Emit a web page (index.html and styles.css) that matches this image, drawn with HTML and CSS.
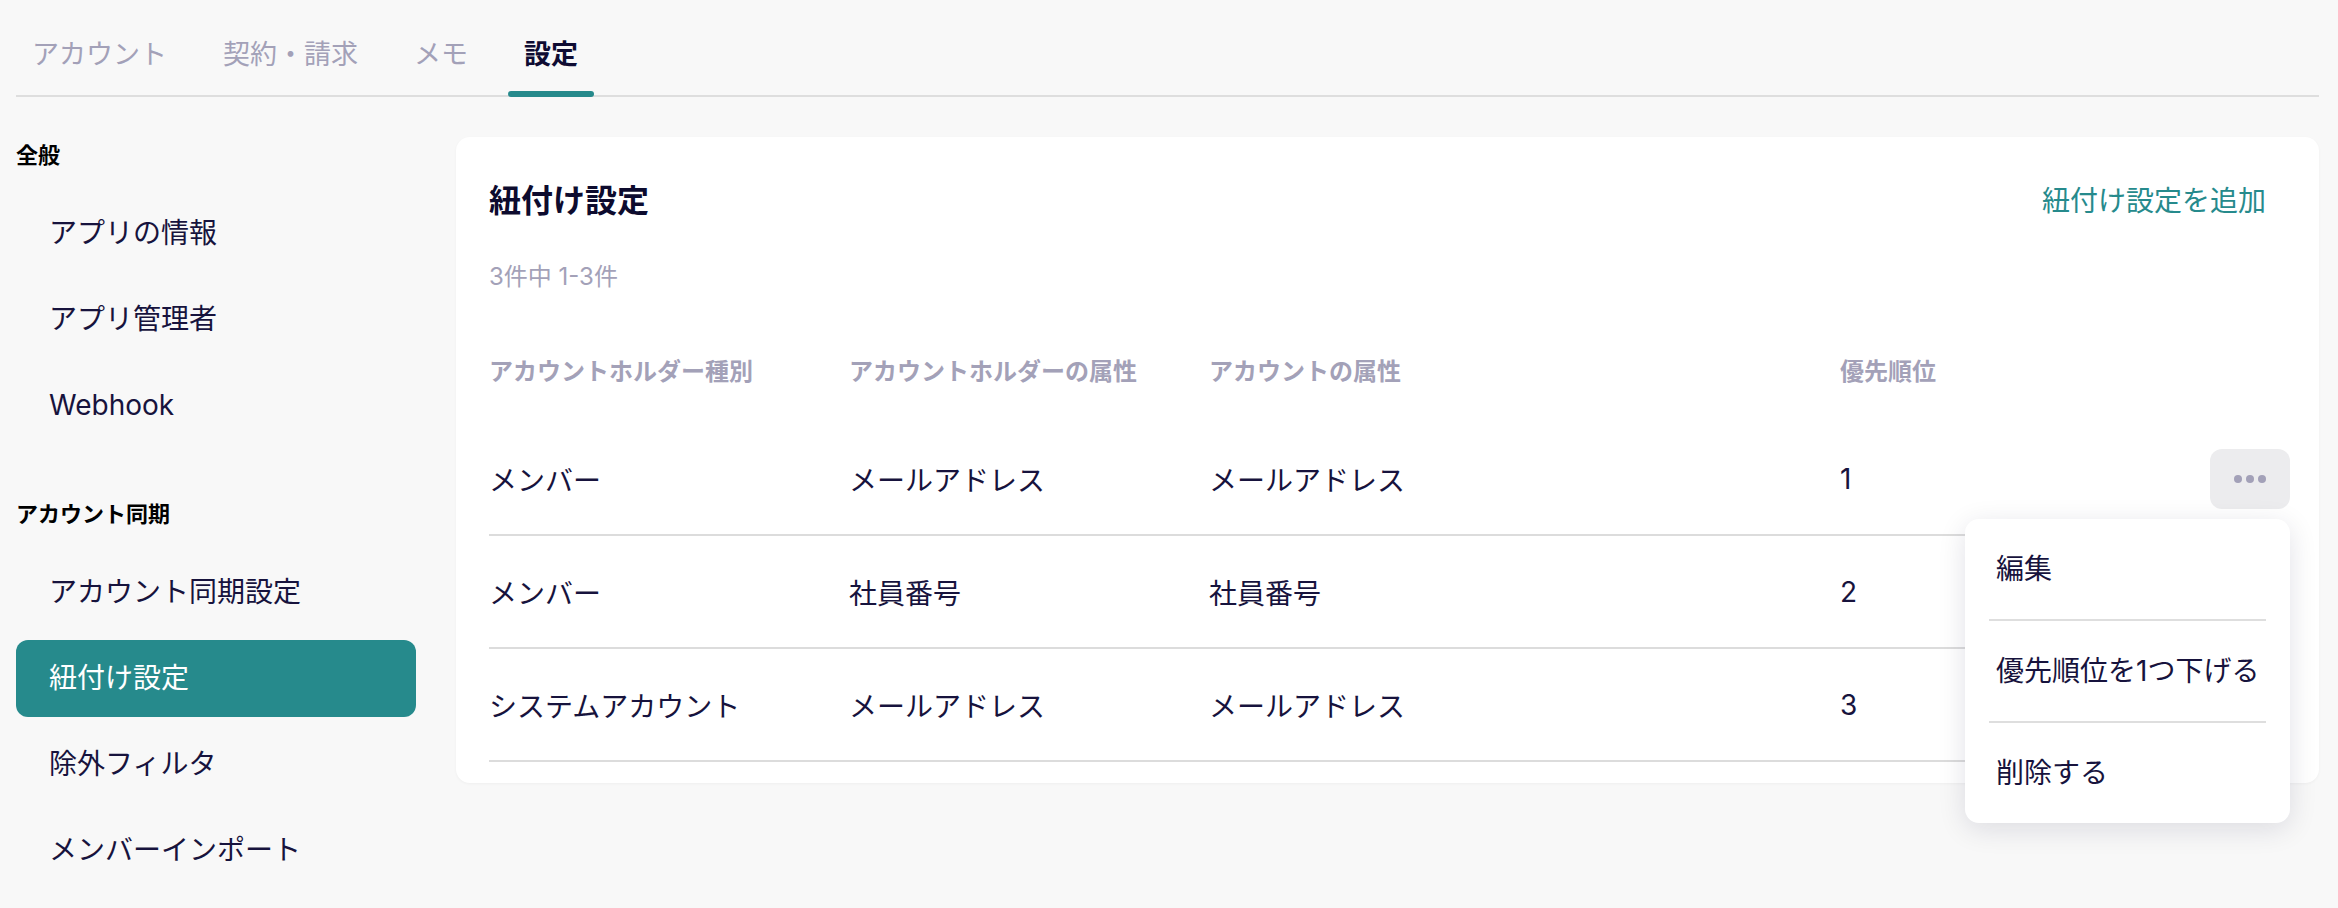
FILE: index.html
```html
<!DOCTYPE html>
<html lang="ja">
<head>
    <meta charset="UTF-8">
    <meta name="viewport" content="width=device-width, initial-scale=1.0">
    <title>設定 - 紐付け設定</title>
    <link rel="stylesheet" href="styles.css">
</head>
<body>
    <nav class="tabs">
        <a class="tab">アカウント</a>
        <a class="tab">契約・請求</a>
        <a class="tab">メモ</a>
        <a class="tab active">設定</a>
    </nav>

    <div class="layout">
        <aside class="sidebar">
            <div class="side-group">
                <h3 class="side-heading">全般</h3>
                <ul class="side-list">
                    <li class="side-item">アプリの情報</li>
                    <li class="side-item">アプリ管理者</li>
                    <li class="side-item">Webhook</li>
                </ul>
            </div>
            <div class="side-group">
                <h3 class="side-heading">アカウント同期</h3>
                <ul class="side-list">
                    <li class="side-item">アカウント同期設定</li>
                    <li class="side-item active">紐付け設定</li>
                    <li class="side-item">除外フィルタ</li>
                    <li class="side-item">メンバーインポート</li>
                </ul>
            </div>
        </aside>

        <main class="card">
            <div class="card-head">
                <h2 class="card-title">紐付け設定</h2>
                <a class="add-link">紐付け設定を追加</a>
            </div>
            <p class="count">3件中 1-3件</p>

            <table class="rules">
                <thead>
                    <tr>
                        <th class="col-type">アカウントホルダー種別</th>
                        <th class="col-attr">アカウントホルダーの属性</th>
                        <th class="col-acc">アカウントの属性</th>
                        <th class="col-prio">優先順位</th>
                        <th class="col-actions"></th>
                    </tr>
                </thead>
                <tbody>
                    <tr>
                        <td>メンバー</td>
                        <td>メールアドレス</td>
                        <td>メールアドレス</td>
                        <td>1</td>
                        <td class="actions">
                            <button class="kebab" aria-label="メニュー">
                                <svg width="32" height="8" viewBox="0 0 32 8">
                                    <circle cx="4" cy="4" r="4" fill="#a3a1b8"/>
                                    <circle cx="16" cy="4" r="4" fill="#a3a1b8"/>
                                    <circle cx="28" cy="4" r="4" fill="#a3a1b8"/>
                                </svg>
                            </button>
                            <div class="menu">
                                <div class="menu-item">編集</div>
                                <div class="menu-sep"></div>
                                <div class="menu-item">優先順位を1つ下げる</div>
                                <div class="menu-sep"></div>
                                <div class="menu-item">削除する</div>
                            </div>
                        </td>
                    </tr>
                    <tr>
                        <td>メンバー</td>
                        <td>社員番号</td>
                        <td>社員番号</td>
                        <td>2</td>
                        <td class="actions"></td>
                    </tr>
                    <tr>
                        <td>システムアカウント</td>
                        <td>メールアドレス</td>
                        <td>メールアドレス</td>
                        <td>3</td>
                        <td class="actions"></td>
                    </tr>
                </tbody>
            </table>
        </main>
    </div>
</body>
</html>
```

FILE: styles.css
```css
body {
    font-family: Inter, "Noto Sans CJK JP", sans-serif;
    margin: 0;
    padding: 0 19px 0 16px;
    background: #f8f8f8;
    color: #17133d;
}
ul {
    list-style: none;
    margin: 0;
    padding: 0;
}

/* tabs */
.tabs {
    display: flex;
    gap: 24px;
    border-bottom: 2px solid #dedede;
}
.tab {
    position: relative;
    padding: 35px 16px 20px;
    font-size: 27px;
    line-height: 40px;
    color: #a3a1b8;
    cursor: pointer;
}
.tab.active {
    color: #0f0c33;
    font-weight: 700;
}
.tab.active::after {
    content: "";
    position: absolute;
    left: 0;
    right: 0;
    bottom: -2px;
    height: 6px;
    border-radius: 3px;
    background: #268a8c;
}

.layout {
    display: flex;
    gap: 40px;
    margin-top: 40px;
    align-items: flex-start;
}

/* sidebar */
.sidebar {
    width: 400px;
    flex-shrink: 0;
    padding-top: 3px;
}
.side-group + .side-group {
    margin-top: 55px;
}
.side-heading {
    margin: 0 0 25px;
    font-size: 22px;
    line-height: 30px;
    font-weight: 700;
    color: #000;
}
.side-list {
    display: flex;
    flex-direction: column;
    gap: 9px;
}
.side-item {
    height: 77px;
    line-height: 77px;
    padding-left: 33px;
    font-size: 28px;
    border-radius: 12px;
    cursor: pointer;
}
.side-item.active {
    background: #268a8c;
    color: #fff;
}

/* card */
.card {
    flex: 1;
    background: #fff;
    border-radius: 14px;
    padding: 42px 29px 21px 33px;
    box-shadow: 0 1px 3px rgba(0,0,0,0.04);
}
.card-head {
    display: flex;
    justify-content: space-between;
    align-items: center;
}
.card-title {
    margin: 0;
    font-size: 32px;
    line-height: 44px;
    font-weight: 700;
    color: #0d0b2e;
}
.add-link {
    font-size: 28px;
    line-height: 40px;
    padding-right: 24px;
    color: #268a8c;
    cursor: pointer;
}
.count {
    margin: 38px 0 0;
    font-size: 24px;
    line-height: 32px;
    color: #a3a1b8;
}

.rules {
    width: 100%;
    margin-top: 22px;
    border-collapse: separate;
    border-spacing: 0;
    table-layout: fixed;
}
.rules th {
    height: 108px;
    padding: 0;
    text-align: left;
    font-size: 24px;
    font-weight: 700;
    color: #a3a1b8;
}
.col-type,
.col-attr { width: 360px; }
.col-acc { width: 631px; }
.col-actions { width: 250px; }
.rules td {
    height: 111px;
    padding: 0;
    font-size: 28px;
    border-bottom: 2px solid #dcdcdc;
    vertical-align: middle;
}
.rules td.actions {
    position: relative;
    text-align: right;
}

.kebab {
    display: inline-flex;
    align-items: center;
    justify-content: center;
    width: 80px;
    height: 60px;
    border: none;
    border-radius: 12px;
    background: #ececee;
    vertical-align: middle;
    cursor: pointer;
}

/* dropdown */
.menu {
    position: absolute;
    top: calc(50% + 40px);
    right: 0;
    width: 325px;
    background: #fff;
    border-radius: 14px;
    box-shadow: 0 6px 28px rgba(20,18,60,0.12);
    text-align: left;
    z-index: 10;
}
.menu-item {
    height: 100px;
    line-height: 100px;
    padding-left: 31px;
    font-size: 28px;
    cursor: pointer;
}
.menu-sep {
    height: 2px;
    margin: 0 24px;
    background: #dedede;
}
```
